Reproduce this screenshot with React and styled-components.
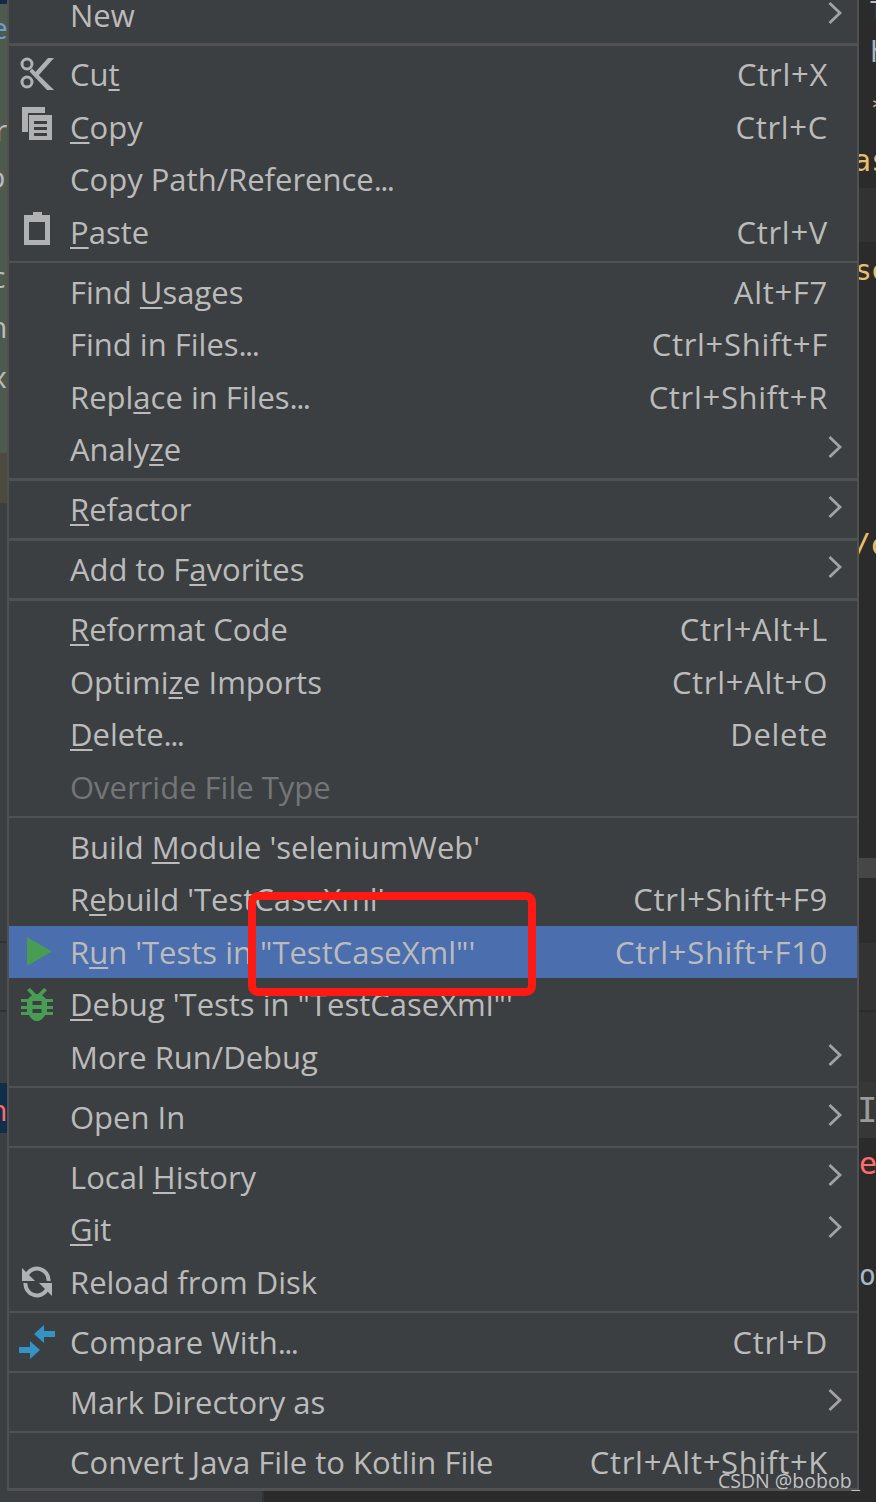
import React from "react";
import styled, { createGlobalStyle } from "styled-components";

const Global = createGlobalStyle`
  html, body { margin: 0; padding: 0; background: #2b2b2b; }
  body { width: 876px; height: 1502px; overflow: hidden; font-family: "Open Sans", "Liberation Sans", sans-serif; }
`;

const Page = styled.div`
  position: relative;
  width: 876px;
  height: 1502px;
  overflow: hidden;
  display: grid;
  grid-template-columns: 7px 852px 17px;
  background: #2b2b2b;
`;

const Strip = styled.div`
  display: flex;
  flex-direction: column;
  overflow: hidden;
`;

const StripBand = styled.div`
  height: ${(p) => p.$h}px;
  flex: none;
  background: ${(p) => p.$bg};
  position: relative;
  overflow: hidden;
`;

const StripGlyph = styled.span`
  position: absolute;
  left: ${(p) => p.$x}px;
  top: ${(p) => p.$y}px;
  font-family: ${(p) => (p.$mono ? '"DejaVu Sans Mono", monospace' : '"Open Sans", sans-serif')};
  font-size: ${(p) => p.$size || 30}px;
  line-height: 1;
  color: ${(p) => p.$c};
`;

const Menu = styled.div`
  display: flex;
  flex-direction: column;
  height: 1491px;
  box-sizing: border-box;
  background: #3c3f41;
  border-left: 2px solid #515151;
  border-right: 2px solid #515151;
  border-bottom: 3px solid #515151;
`;

const Row = styled.div`
  flex: none;
  height: ${(p) => (p.$clip ? 40.5 : 52.5)}px;
  display: flex;
  align-items: ${(p) => (p.$clip ? "flex-start" : "center")};
  padding-left: 61px;
  padding-right: 29px;
  position: relative;
  font-size: 31px;
  line-height: 52px;
  white-space: nowrap;
  color: ${(p) => (p.$disabled ? "#737576" : "#bbbbbb")};
  background: ${(p) => (p.$active ? "#4b6eaf" : "transparent")};
`;

const Label = styled.span`
  flex: 1;
  margin-top: ${(p) => (p.$clip ? "-11px" : "0")};
  u {
    text-decoration: underline;
    text-decoration-thickness: 2px;
    text-underline-offset: 3px;
    text-decoration-skip-ink: none;
  }
`;

const Dots = styled.span`
  letter-spacing: -1.6px;
`;

const Shortcut = styled.span`
  flex: none;
  letter-spacing: 0.7px;
`;

const Slot = styled.span`
  position: absolute;
  left: 8px;
  top: 50%;
  transform: translateY(-50%);
  width: 40px;
  height: 40px;
  display: flex;
  align-items: center;
  justify-content: center;
`;

const Chevron = styled.svg`
  position: absolute;
  right: 15px;
  top: ${(p) => (p.$clip ? "1px" : "calc(50% - 2px)")};
  transform: ${(p) => (p.$clip ? "none" : "translateY(-50%)")};
`;

const Sep = styled.div`
  flex: none;
  height: 7.5px;
  display: flex;
  align-items: center;
  &::after {
    content: "";
    display: block;
    width: 100%;
    height: 2.5px;
    background: #515151;
  }
`;

const RedBox = styled.div`
  position: absolute;
  left: 248px;
  top: 892px;
  width: 288px;
  height: 104px;
  box-sizing: border-box;
  border: 8px solid #fe1a12;
  border-radius: 10px;
`;

const Watermark = styled.div`
  position: absolute;
  left: 718px;
  top: 1469px;
  font-family: "Open Sans", sans-serif;
  font-size: 19.5px;
  line-height: 24px;
  color: #c0c2c3;
  white-space: nowrap;
`;

const Footer = styled.div`
  position: absolute;
  left: 0;
  right: 0;
  top: 1491px;
  height: 11px;
  display: grid;
  grid-template-columns: 262px 2px 1fr;
`;

const FooterCell = styled.div`
  background: ${(p) => p.$bg};
`;

const ChevronIcon = ({ clip }) => (
  <Chevron $clip={clip} width="14" height="24" viewBox="0 0 14 24" fill="none">
    <path d="M1.5 2 L12 12 L1.5 22" stroke="#a3a3a3" strokeWidth="2.8" />
  </Chevron>
);

const CutIcon = () => (
  <svg width="36" height="36" viewBox="0 0 36 36" fill="none">
    <circle cx="8" cy="8" r="5" stroke="#afb1b3" strokeWidth="3" />
    <circle cx="8" cy="26" r="5" stroke="#afb1b3" strokeWidth="3" />
    <path d="M29 2 H35 L19 20 L16 16.500 Z" fill="#afb1b3" />
    <path d="M35 34 H28 L10.500 15.500 L13 12.500 Z" fill="#afb1b3" />
  </svg>
);

const CopyIcon = () => (
  <svg width="36" height="40" viewBox="0 0 36 40">
    <path d="M3 0 H26 V6 H9 V25 H3 Z" fill="#afb1b3" />
    <path d="M10 8 H33 V33 H10 Z" fill="#afb1b3" />
    <path d="M15 14 H28 V17 H15 Z M15 20 H28 V23 H15 Z M15 26 H28 V29 H15 Z" fill="#3c3f41" />
  </svg>
);

const PasteIcon = () => (
  <svg width="28" height="40" viewBox="0 0 28 40">
    <path fillRule="evenodd" d="M10 0 H19 V3 H27 V33 H1 V3 H10 Z M6 10 V28 H22 V10 Z" fill="#afb1b3" />
  </svg>
);

const RunIcon = () => (
  <svg width="36" height="30" viewBox="0 0 36 30">
    <path d="M8 0 L33 14.500 L8 29 Z" fill="#499c54" />
  </svg>
);

const DebugIcon = () => (
  <svg width="32" height="36" viewBox="0 0 32 36">
    <path d="M9 2 L15 8 H17 L23 2 L26 4 L21 9.500 Q24 11 25 13 H32 V16 H26 V20 H32 V23 H26 V26 H32 V29 H24 Q21 35 16 35 Q11 35 8 29 H0 V26 H6 V23 H0 V20 H6 V16 H0 V13 H7 Q8 11 11 9.500 L6 4 Z" fill="#499c54" />
    <path d="M11.500 15 H20.500 V19 H11.500 Z M11.500 23 H20.500 V27 H11.500 Z" fill="#3c3f41" />
  </svg>
);

const ReloadIcon = () => (
  <svg width="32" height="32" viewBox="0 0 32 32" fill="none">
    <path d="M6 8.500 A11.500 11.500 0 0 1 27.500 15" stroke="#afb1b3" strokeWidth="4" />
    <path d="M26 23.500 A11.500 11.500 0 0 1 4.500 17" stroke="#afb1b3" strokeWidth="4" />
    <path d="M1 2 V15 H14 Z" fill="#afb1b3" />
    <path d="M31 30 V17 H18 Z" fill="#afb1b3" />
  </svg>
);

const CompareIcon = () => (
  <svg width="36" height="36" viewBox="0 0 36 36">
    <path d="M15 10 L25 1 V7 H36 V13 H25 V19 Z" fill="#3592c4" />
    <path d="M21 26 L11 35 V29 H0 V23 H11 V17 Z" fill="#3592c4" />
  </svg>
);

const groups = [
  [{ label: "New", clip: true, sub: true }],
  [
    { label: <>Cu<u>t</u></>, icon: <CutIcon />, key: "Ctrl+X" },
    { label: <><u>C</u>opy</>, icon: <CopyIcon />, key: "Ctrl+C" },
    { label: <>Copy Path/Reference<Dots>...</Dots></> },
    { label: <><u>P</u>aste</>, icon: <PasteIcon />, key: "Ctrl+V" },
  ],
  [
    { label: <>Find <u>U</u>sages</>, key: "Alt+F7" },
    { label: <>Find in Files<Dots>...</Dots></>, key: "Ctrl+Shift+F" },
    { label: <>Repl<u>a</u>ce in Files<Dots>...</Dots></>, key: "Ctrl+Shift+R" },
    { label: <>Analy<u>z</u>e</>, sub: true },
  ],
  [{ label: <><u>R</u>efactor</>, sub: true }],
  [{ label: <>Add to F<u>a</u>vorites</>, sub: true }],
  [
    { label: <><u>R</u>eformat Code</>, key: "Ctrl+Alt+L" },
    { label: <>Optimi<u>z</u>e Imports</>, key: "Ctrl+Alt+O" },
    { label: <><u>D</u>elete<Dots>...</Dots></>, key: "Delete" },
    { label: "Override File Type", disabled: true },
  ],
  [
    { label: <>Build <u>M</u>odule 'seleniumWeb'</> },
    { label: <>R<u>e</u>build 'TestCaseXml'</>, key: "Ctrl+Shift+F9" },
    { label: <>R<u>u</u>n 'Tests in "TestCaseXml"'</>, icon: <RunIcon />, key: "Ctrl+Shift+F10", active: true },
    { label: <><u>D</u>ebug 'Tests in "TestCaseXml"'</>, icon: <DebugIcon /> },
    { label: "More Run/Debug", sub: true },
  ],
  [{ label: "Open In", sub: true }],
  [
    { label: <>Local <u>H</u>istory</>, sub: true },
    { label: <><u>G</u>it</>, sub: true },
    { label: "Reload from Disk", icon: <ReloadIcon /> },
  ],
  [{ label: <>Compare With<Dots>...</Dots></>, icon: <CompareIcon />, key: "Ctrl+D" }],
  [{ label: "Mark Directory as", sub: true }],
  [{ label: "Convert Java File to Kotlin File", key: "Ctrl+Alt+Shift+K" }],
];

const YELLOW = "#e8bf6a";

export default function App() {
  return (
    <>
      <Global />
      <Page>
        <Strip>
          <StripBand $h={4} $bg="#13294a" />
          <StripBand $h={449} $bg="#4f5a4f">
            <StripGlyph $x={-9} $y={9} $c="#6a9fd0">e</StripGlyph>
            <StripGlyph $x={-5} $y={111} $c="#bbbbbb">r</StripGlyph>
            <StripGlyph $x={-13} $y={158} $c="#bbbbbb">p</StripGlyph>
            <StripGlyph $x={-9} $y={258} $c="#bbbbbb">c</StripGlyph>
            <StripGlyph $x={-11} $y={308} $c="#bbbbbb">n</StripGlyph>
            <StripGlyph $x={-9} $y={358} $c="#bbbbbb">x</StripGlyph>
          </StripBand>
          <StripBand $h={50} $bg="#4b4a3f" />
          <StripBand $h={438} $bg="#3c3f41" />
          <StripBand $h={2} $bg="#303234" />
          <StripBand $h={67} $bg="#3c3f41" />
          <StripBand $h={2} $bg="#303234" />
          <StripBand $h={71} $bg="#3c3f41" />
          <StripBand $h={50} $bg="#0f2e49">
            <StripGlyph $x={-11} $y={12} $c="#ff6a6a">n</StripGlyph>
          </StripBand>
          <StripBand $h={369} $bg="#3c3f41" />
        </Strip>
        <Menu>
          {groups.map((g, i) => (
            <React.Fragment key={i}>
              {i > 0 && <Sep />}
              {g.map((it, j) => (
                <Row key={j} $clip={it.clip} $active={it.active} $disabled={it.disabled}>
                  {it.icon && <Slot>{it.icon}</Slot>}
                  <Label $clip={it.clip}>{it.label}</Label>
                  {it.key && <Shortcut>{it.key}</Shortcut>}
                  {it.sub && <ChevronIcon clip={it.clip} />}
                </Row>
              ))}
            </React.Fragment>
          ))}
        </Menu>
        <Strip>
          <StripBand $h={188} $bg="#2b2b2b">
            <StripGlyph $x={11} $y={-1} $mono $size={24} $c="#bbbbbb">T</StripGlyph>
            <StripGlyph $x={11} $y={39} $mono $size={28} $c="#a9b7c6">h</StripGlyph>
            <StripGlyph $x={12} $y={96} $mono $size={24} $c={YELLOW}>*</StripGlyph>
            <StripGlyph $x={-6} $y={146} $mono $size={30} $c={YELLOW}>as</StripGlyph>
          </StripBand>
          <StripBand $h={54} $bg="#323232" />
          <StripBand $h={616} $bg="#2b2b2b">
            <StripGlyph $x={-4} $y={15} $mono $size={28} $c={YELLOW}>se</StripGlyph>
            <StripGlyph $x={-6} $y={288} $mono $size={30} $c={YELLOW}>/</StripGlyph>
            <StripGlyph $x={11} $y={288} $mono $size={30} $c={YELLOW}>c</StripGlyph>
          </StripBand>
          <StripBand $h={20} $bg="#464646" />
          <StripBand $h={65} $bg="#2d2d2d" />
          <StripBand $h={67} $bg="#333333" />
          <StripBand $h={2} $bg="#2b2b2b" />
          <StripBand $h={70} $bg="#333333" />
          <StripBand $h={56} $bg="#373737">
            <StripGlyph $x={-2} $y={11} $size={34} $mono $c="#9a9a9a">I</StripGlyph>
          </StripBand>
          <StripBand $h={364} $bg="#2b2b2b">
            <StripGlyph $x={0} $y={11} $mono $size={30} $c="#ff6b68">e</StripGlyph>
            <StripGlyph $x={0} $y={124} $mono $size={28} $c="#a9b7c6">o</StripGlyph>
          </StripBand>
        </Strip>
        <RedBox />
        <Watermark>CSDN @bobob_</Watermark>
        <Footer>
          <FooterCell $bg="#3c3f41" />
          <FooterCell $bg="#333333" />
          <FooterCell $bg="#2b2b2b" />
        </Footer>
      </Page>
    </>
  );
}
